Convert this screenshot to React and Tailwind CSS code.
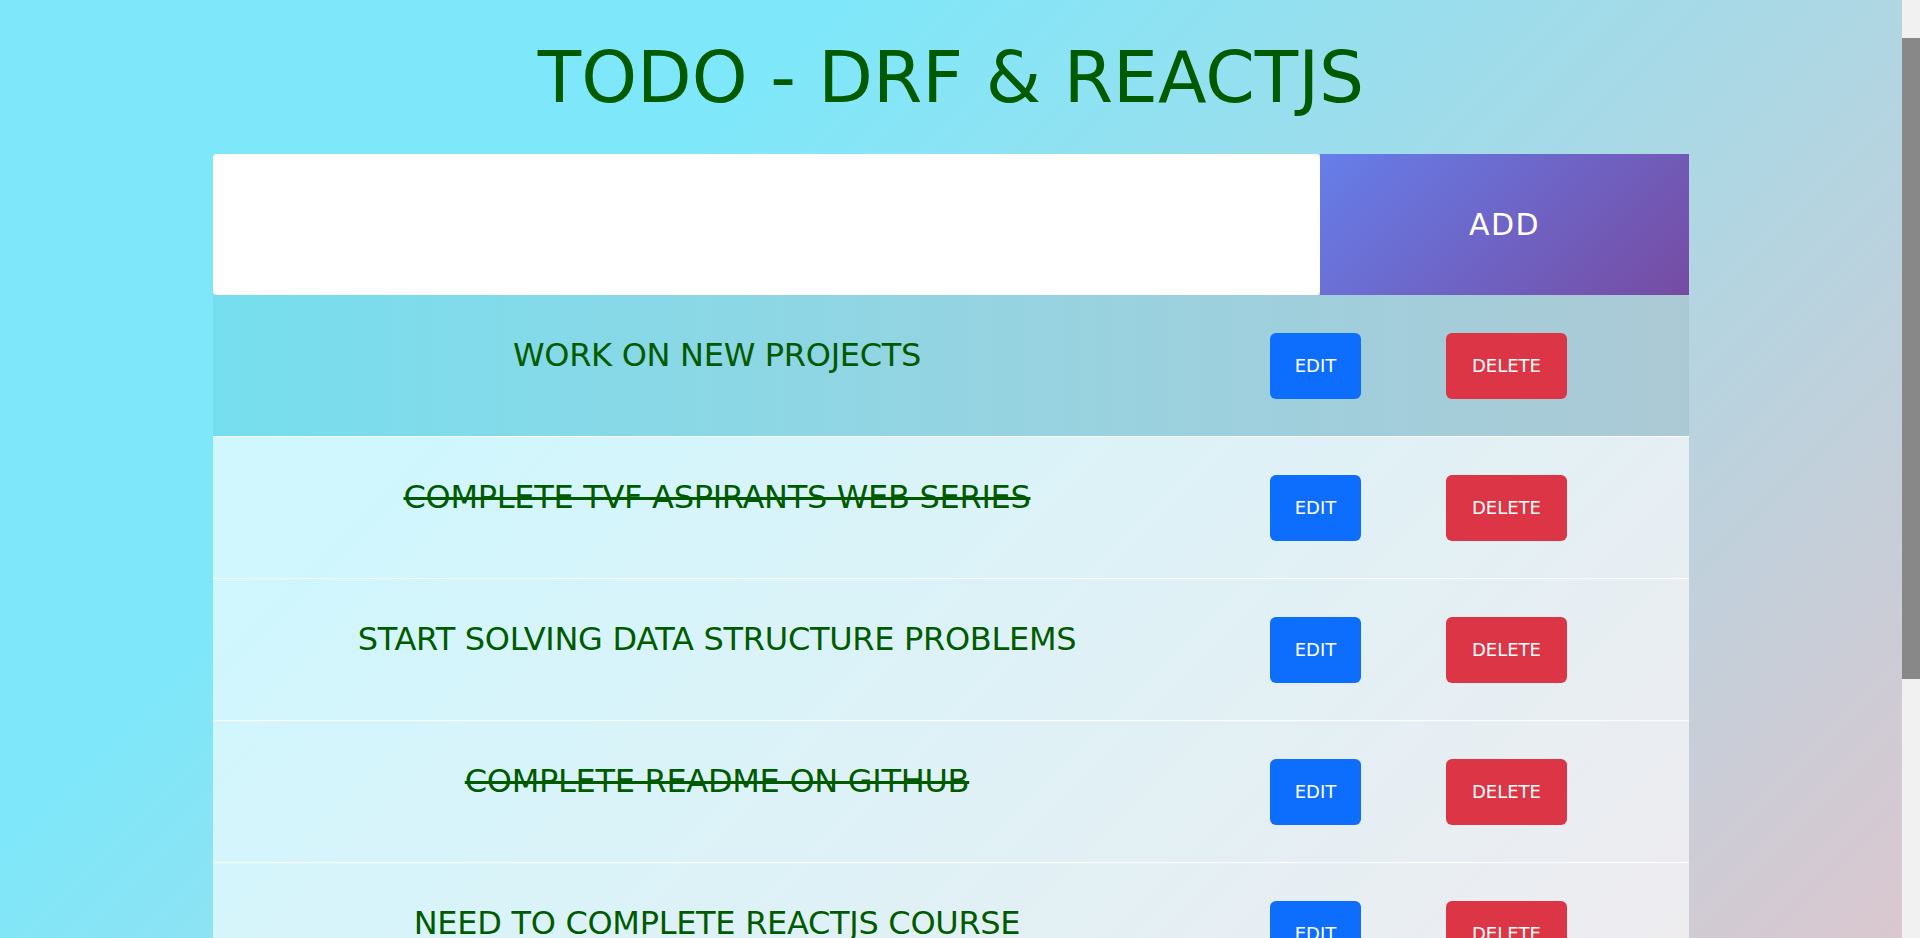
import { useState } from 'react';

const initialTodos = [
  { id: 1, title: 'Work on new projects', completed: false },
  { id: 2, title: 'Complete TVF Aspirants web series', completed: true },
  { id: 3, title: 'Start solving data structure problems', completed: false },
  { id: 4, title: 'Complete readme on github', completed: true },
  { id: 5, title: 'Need to complete ReactJS course', completed: false },
  { id: 6, title: 'Learn Django Rest Framework', completed: false },
];

export default function App() {
  const [todos] = useState(initialTodos);
  const [newTitle, setNewTitle] = useState('');

  return (
    <div className="flex h-screen overflow-hidden font-['DejaVu_Sans',sans-serif]">
      {/* Page */}
      <div className="flex-1 h-full overflow-hidden bg-[linear-gradient(135deg,#7ee8fa_586px,#eec0c6_2311px)]">
        {/* Title */}
        <div className="h-[154px] flex items-center justify-center">
          <h1 className="text-[71px] leading-none font-normal text-[#005a00] uppercase">
            Todo - DRF &amp; ReactJS
          </h1>
        </div>

        <div className="w-[1476px] mx-auto">
          {/* Add form */}
          <form onSubmit={e => e.preventDefault()} className="flex h-[141px]">
            <input
              type="text"
              value={newTitle}
              onChange={e => setNewTitle(e.target.value)}
              className="w-[1107px] h-full bg-white rounded-[4px] px-6 text-2xl text-[#005a00] outline-none"
            />
            <button
              type="submit"
              className="flex-1 h-full bg-[linear-gradient(135deg,#667eea,#764ba2)] text-white text-[30px] tracking-[1.5px] uppercase"
            >
              Add
            </button>
          </form>

          {/* Todo list */}
          <ul>
            {todos.map((todo, i) => (
              <li
                key={todo.id}
                className={
                  i === 0
                    ? 'flex items-center h-[142px] border-b border-white bg-linear-to-r from-[#75deee] to-[#abc9d5]'
                    : 'flex items-center h-[142px] border-b border-white bg-white/[0.63]'
                }
              >
                <div className="w-[1008px] flex justify-center">
                  <p
                    className={
                      todo.completed
                        ? 'mb-[22px] text-[32px] leading-[48px] tracking-[-0.3px] uppercase text-[#005a00] line-through decoration-[3px]'
                        : 'mb-[22px] text-[32px] leading-[48px] tracking-[-0.3px] uppercase text-[#005a00]'
                    }
                  >
                    {todo.title}
                  </p>
                </div>
                <div className="w-[189px] flex justify-center">
                  <button className="h-[66px] px-[25px] rounded-[6px] bg-[#0d6efd] text-white text-[18px] uppercase">
                    Edit
                  </button>
                </div>
                <div className="w-[193px] flex justify-center">
                  <button className="h-[66px] px-[26px] rounded-[6px] bg-[#dc3545] text-white text-[18px] uppercase">
                    Delete
                  </button>
                </div>
              </li>
            ))}
          </ul>
        </div>
      </div>

      {/* Scrollbar */}
      <div className="w-[18px] h-full bg-[#f1f1f1] pt-[38px]">
        <div className="h-[641px] bg-[#888]" />
      </div>
    </div>
  );
}
